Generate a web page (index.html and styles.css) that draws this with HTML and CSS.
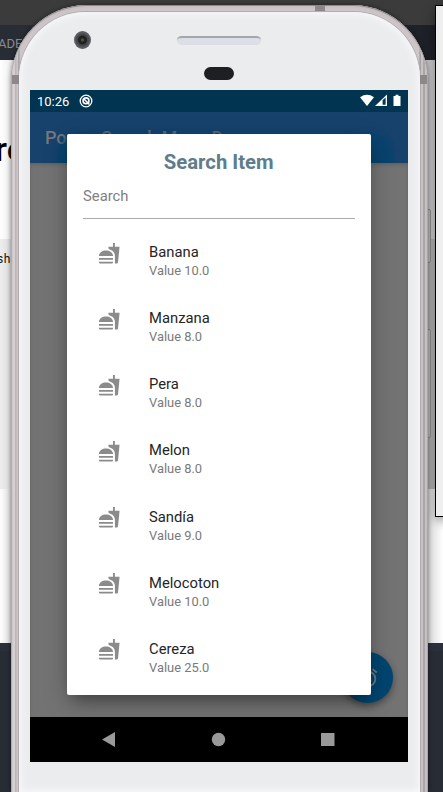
FILE: index.html
```html
<!DOCTYPE html>
<html lang="en">
<head>
<meta charset="utf-8">
<title>Search Item</title>
<link rel="stylesheet" href="styles.css">
</head>
<body>
<svg class="defs" aria-hidden="true">
  <symbol id="food" viewBox="0 0 24 24"><path d="M18.060 22.990h1.660c.84 0 1.530-.64 1.630-1.460L23 5.050h-5V1h-1.970v4.050h-4.970l.3 2.340c1.710.47 3.310 1.320 4.270 2.260 1.440 1.420 2.430 2.890 2.430 5.290v8.050zM1 21.990V21h15.030v.99c0 .55-.45 1-1.010 1H2.010c-.56 0-1.010-.45-1.010-1zm15.030-7c0-8-15.030-8-15.030 0h15.030zM1.020 17h15v2h-15z"/></symbol>
</svg>
<div class="desk">
  <div class="strip"></div>
  <div class="nav-dark">ADE</div>
  <div class="hero">re</div>
  <div class="code">sh</div>
  <div class="blank"></div>
  <div class="footer"></div>
</div>
<div class="window"></div>
<div class="side-key power"></div>
<div class="side-key volume"></div>
<div class="phone">
  <i class="band band-top"></i><i class="band band-left"></i><i class="band band-right"></i>
  <div class="face">
    <header class="hardware">
      <i class="camera"></i><i class="speaker"></i><i class="sensor"></i>
    </header>
    <main class="screen">
      <div class="status">
        <span>10:26</span>
        <svg class="debug" viewBox="0 0 14 14"><circle cx="7" cy="7" r="5.800" fill="none" stroke="#fff" stroke-width="1.300"/><circle cx="7" cy="6.700" r="2.900" fill="none" stroke="#fff" stroke-width="1.700"/><path d="M5 5l5.500 5.500" stroke="#fff" stroke-width="1.500"/></svg>
        <svg class="signals" viewBox="0 0 42 14"><path d="M0 3.200Q7 -1.500 14 3.200L7 12z" fill="#fff"/><path d="M15 12L27 .6V12z" fill="#fff"/><path d="M22.600 6.200L25.600 3.400V10.800H22.600z" fill="#003450"/><path d="M33.500 2h2V.8h3V2h2v10h-7z" fill="#fff"/></svg>
      </div>
      <div class="appbar">Popup Search Menu Demo</div>
      <div class="content">
        <div class="fab"><svg viewBox="0 0 24 24" fill="none" stroke="#72797d" stroke-width="1.900"><circle cx="12" cy="13" r="8"/><path d="M12 8v5l3.500 2M2.500 6L7 2.300M17 2.300L21.500 6"/></svg></div>
      </div>
      <div class="android-nav">
        <svg viewBox="0 0 378 45" fill="#999"><path d="M72 22.500L85 15v15z"/><circle cx="188.500" cy="22.500" r="6.700"/><rect x="291" y="16" width="13.500" height="13" rx=".5"/></svg>
      </div>
      <section class="dialog">
        <h1>Search Item</h1>
        <div class="field">Search</div>
        <ul>
          <li><svg><use href="#food"/></svg><div><b>Banana</b><span>Value 10.0</span></div></li>
          <li><svg><use href="#food"/></svg><div><b>Manzana</b><span>Value 8.0</span></div></li>
          <li><svg><use href="#food"/></svg><div><b>Pera</b><span>Value 8.0</span></div></li>
          <li><svg><use href="#food"/></svg><div><b>Melon</b><span>Value 8.0</span></div></li>
          <li><svg><use href="#food"/></svg><div><b>Sandía</b><span>Value 9.0</span></div></li>
          <li><svg><use href="#food"/></svg><div><b>Melocoton</b><span>Value 10.0</span></div></li>
          <li><svg><use href="#food"/></svg><div><b>Cereza</b><span>Value 25.0</span></div></li>
        </ul>
      </section>
    </main>
  </div>
</div>
</body>
</html>
```
FILE: styles.css
```css
* { box-sizing: border-box; }
html { height: 792px; overflow: hidden; }
body { margin: 0; width: 443px; height: 792px; overflow: hidden; position: relative; font-family: Roboto, sans-serif; }
.defs { position: absolute; width: 0; height: 0; }

/* page behind the phone */
.desk { height: 792px; display: flex; flex-direction: column; }
.strip { height: 25px; background: #3b3b3b; }
.nav-dark { height: 35px; background: linear-gradient(90deg, #282c34 60%, #1c2026); color: #888b8f; font-size: 13px; line-height: 37px; text-indent: -2px; overflow: hidden; }
.hero { height: 179px; background: linear-gradient(90deg, #fff, #eee 11px, #c8c8ca 430px, #ccc); font: 500 34px/178px Roboto, sans-serif; text-indent: -5px; color: #000; }
.code { height: 250px; background: linear-gradient(90deg, #eee, #ddd 11px, #aaa 425px, #bbb); font: 400 12px/40px Roboto, sans-serif; letter-spacing: .5px; text-indent: -3px; color: #111; }
.blank { height: 154px; background: linear-gradient(90deg, #fff, #ddd 11px, #d4d4d4 427px, #fff); }
.footer { flex: 1; background: linear-gradient(#2b303a 8px, #282c35 8px); }
.window { position: absolute; left: 435px; top: 5px; width: 20px; height: 512px; background: #efefef; border: 1px solid #000; box-shadow: 0 3px 12px #0006; }

/* phone body */
.side-key { position: absolute; left: 426px; width: 5px; border: 1px solid #858585; border-radius: 2px; background: #b4b4b4; }
.power { top: 209px; height: 54px; }
.volume { top: 329px; height: 109px; }
.phone { position: absolute; left: 11px; top: 5px; width: 417px; height: 787px; padding: 7px 8px 0; border-radius: 76px 76px 0 0; background: linear-gradient(90deg, #8f898b 0, #c9c2c5 1px, #ddd6d9 3px, #cfc8cb 4px, #aaa3a6 5px, #ded8db 6px, #989396 8px, #ccc6c9 9px, #ccc6c9 408px, #989396 409px, #d7d1d4 411px, #9d979a 413px, #d6cfd2 415px, #918b8e 417px); box-shadow: 0 0 5px #0007, inset 0 1px #8e888b, inset 0 3px 2px #c5bfc2; }
.band { position: absolute; background: #8d8789; }
.band-top { left: 304px; top: 0; width: 10px; height: 6px; }
.band-left { left: 1px; top: 70px; width: 7px; height: 9px; }
.band-right { right: 1px; top: 70px; width: 7px; height: 9px; }
.face { height: 100%; padding: 0 11px; border-radius: 67px 67px 0 0; background: #ebecee; box-shadow: inset 0 0 7px 2px #f8f8fa, 0 0 0 1px #b3adb0; }
.hardware { height: 78px; position: relative; }
.hardware i { position: absolute; }
.camera { left: 44px; top: 19px; width: 17px; height: 18px; border-radius: 50%; background: radial-gradient(circle, #555525 0 1px, #202326 2px 4px, #45474a 5px 6px, #5a5b5e 7px 9px); }
.speaker { left: 147px; top: 24px; width: 84px; height: 9px; border-radius: 5px; background: #dcdfe6; border-top: 2px solid #a4a7b0; }
.sensor { left: 174px; top: 55px; width: 30px; height: 13px; border-radius: 7px; background: #1d1f22; }

/* phone screen */
.screen { position: relative; width: 378px; height: 672px; overflow: hidden; display: flex; flex-direction: column; }
.status { height: 22px; background: #003450; color: #fff; display: flex; align-items: center; padding: 0 6px 0 7px; font-size: 13px; }
.debug { width: 14px; height: 14px; margin-left: 10px; }
.signals { width: 42px; height: 14px; margin-left: auto; }
.appbar { position: relative; overflow: hidden; height: 51px; background: #16426c; color: #77787b; font-weight: 500; font-size: 18px; line-height: 51px; padding-left: 15px; white-space: nowrap; }
.appbar::after { content: ""; position: absolute; left: 26px; right: 15px; top: 20px; height: 80px; border-radius: 24px; background: #00446f99; filter: blur(2px); }
.content { flex: 1; background: #737373; display: flex; justify-content: flex-end; align-items: flex-end; padding: 0 15px 14px; box-shadow: inset 0 2px 3px #5558; }
.fab { width: 51px; height: 51px; border-radius: 50%; background: #004570; box-shadow: 0 3px 7px #0006; display: grid; place-items: center; }
.fab svg { width: 22px; height: 22px; }
.android-nav { height: 45px; background: #000; }
.android-nav svg { display: block; width: 378px; height: 45px; }

/* search dialog */
.dialog { position: absolute; left: 36.5px; top: 43.5px; width: 304.5px; height: 561.5px; background: #fff; border-radius: 2px; padding: 17px 16.5px 0; box-shadow: 0 10px 14px -6px #0005, 0 8px 26px #0003; }
.dialog h1 { margin: 0; font-size: 20.3px; line-height: 22px; font-weight: 700; color: #607d8b; text-align: center; }
.field { height: 46px; border-bottom: 1px solid #aaa; color: #808080; font-size: 14.8px; line-height: 47px; }
.dialog ul { margin: 8.5px 0 0; padding: 0; list-style: none; }
.dialog li { height: 66.15px; display: flex; padding: 15px 0 0 14.5px; }
.dialog li svg { width: 22.5px; height: 22.5px; margin-top: -.5px; fill: #8b8b8b; }
.dialog li div { margin-left: 29px; }
.dialog b { display: block; font-weight: 400; font-size: 14.8px; line-height: 20px; color: #252525; }
.dialog span { display: block; font-size: 12.9px; line-height: 18px; color: #7a7a7a; }
```
